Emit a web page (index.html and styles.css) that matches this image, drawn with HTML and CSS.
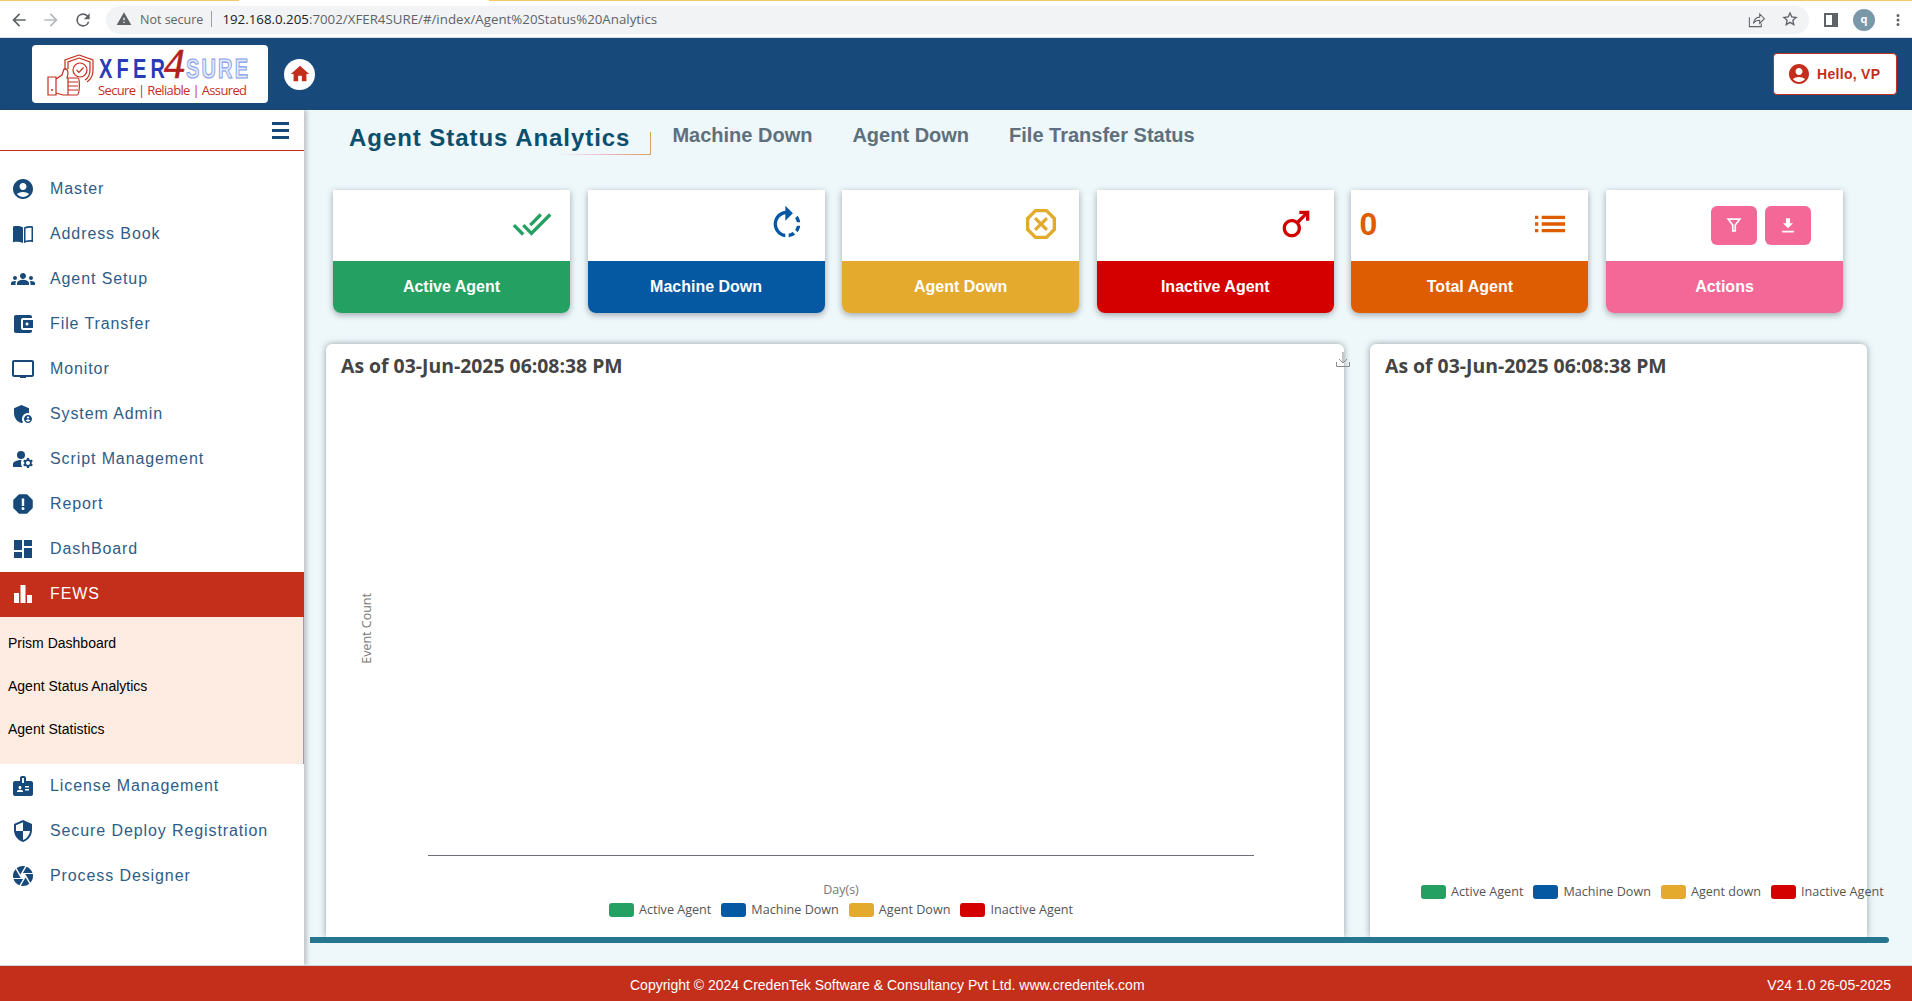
FILE: index.html
```html
<!DOCTYPE html>
<html lang="en">
<head>
    <meta charset="UTF-8">
    <meta name="viewport" content="width=device-width, initial-scale=1.0">
    <title>Agent Status Analytics - XFER4SURE</title>
    <link rel="stylesheet" href="styles.css">
</head>
<body>
    <!-- browser toolbar -->
    <div class="browser-bar">
        <svg class="tool-icon" viewBox="0 0 24 24"><path d="M20 11H7.83l5.59-5.59L12 4l-8 8 8 8 1.41-1.41L7.83 13H20v-2z"/></svg>
        <svg class="tool-icon dim" viewBox="0 0 24 24"><path d="M12 4l-1.41 1.41L16.17 11H4v2h12.17l-5.58 5.59L12 20l8-8z"/></svg>
        <svg class="tool-icon" viewBox="0 0 24 24"><path d="M17.65 6.35A7.96 7.96 0 0 0 12 4a8 8 0 1 0 7.73 10h-2.08A6 6 0 1 1 12 6c1.66 0 3.14.69 4.22 1.78L13 11h7V4l-2.35 2.35z"/></svg>
        <div class="address">
            <svg class="warn-icon" viewBox="0 0 24 24"><path d="M1 21h22L12 2 1 21zm12-3h-2v-2h2v2zm0-4h-2v-4h2v4z"/></svg>
            <span class="not-secure">Not secure</span>
            <span class="address-sep"></span>
            <span class="url"><b>192.168.0.205</b>:7002/XFER4SURE/#/index/Agent%20Status%20Analytics</span>
            <svg class="addr-icon share" viewBox="0 0 24 24"><path d="M3 9v12h15v-4M8 17c1-5 4-8 8-8V5l6 6-6 6v-4c-3 0-6 1-8 4z" fill="none" stroke="#5f6368" stroke-width="1.3"/></svg>
            <svg class="addr-icon" viewBox="0 0 24 24"><path d="M12 3l2.7 6 6.5.7-4.9 4.3 1.4 6.4L12 17l-5.700 3.400 1.400-6.400-4.900-4.300 6.500-.7z" fill="none" stroke="#5f6368" stroke-width="2"/></svg>
        </div>
        <span class="side-panel"></span>
        <span class="avatar">q</span>
        <svg class="tool-icon small" viewBox="0 0 24 24"><path d="M12 8a2 2 0 1 0 0-4 2 2 0 0 0 0 4zm0 2a2 2 0 1 0 0 4 2 2 0 0 0 0-4zm0 6a2 2 0 1 0 0 4 2 2 0 0 0 0-4z"/></svg>
    </div>

    <header class="top-header">
        <div class="logo">
            <svg viewBox="0 0 236 58" width="236" height="58">
                <g fill="none" stroke="#c42f1c" stroke-width="1.200">
                    <path d="M47 10l14 5v10c0 6-3 10-6 12"/>
                    <path d="M47 13l11 4v8c0 4-2 8-5 10"/>
                    <path d="M47 10l-14 5v10"/>
                    <path d="M47 13l-11 4v7"/>
                    <circle cx="48" cy="25" r="7"/>
                    <path d="M44.500 25l2.500 2.500 4.500-5"/>
                    <path d="M16 32h8v18h-8zM24 34l6-4 2-6c4-1 5 3 3 9h11c2 0 2 17-1 17H31l-7-2"/>
                    <path d="M36 33v17M36 37h10M36 41h10M36 45h10"/>
                </g>
                <circle cx="20" cy="45" r="1" fill="#c42f1c"/>
                <text class="logo-xfer" transform="translate(67 33) scale(1 1.35)" textLength="66" lengthAdjust="spacing">XFER</text>
                <text class="logo-sure" transform="translate(154 33) scale(1 1.35)" textLength="62" lengthAdjust="spacing">SURE</text>
                <text class="logo-four" x="132" y="33">4</text>
                <text class="logo-tag" x="66" y="50" textLength="149" lengthAdjust="spacing">Secure | Reliable | Assured</text>
            </svg>
        </div>
        <a class="home-btn">
            <svg viewBox="0 0 24 24" width="22" height="22"><path d="M10 20v-6h4v6h5v-8h3L12 3 2 12h3v8z"/></svg>
        </a>
        <button class="hello-btn">
            <svg viewBox="2 2 20 20" width="20" height="20"><path d="M12 2C6.48 2 2 6.48 2 12s4.48 10 10 10 10-4.48 10-10S17.52 2 12 2zm0 4c1.93 0 3.5 1.57 3.500 3.500S13.93 13 12 13s-3.500-1.570-3.500-3.500S10.070 6 12 6zm0 14c-2.030 0-4.430-.82-6.140-2.880C7.550 15.800 9.680 15 12 15s4.450.8 6.140 2.120C16.430 19.180 14.030 20 12 20z"/></svg>
            Hello, VP
        </button>
    </header>

    <div class="main">
        <aside class="sidebar">
            <div class="side-top">
                <span class="burger"><i></i><i></i><i></i></span>
            </div>
            <nav class="side-nav">
                <a class="nav-item"><svg viewBox="0 0 24 24"><path d="M12 2C6.48 2 2 6.48 2 12s4.48 10 10 10 10-4.48 10-10S17.52 2 12 2zm0 4c1.93 0 3.500 1.570 3.500 3.500S13.930 13 12 13s-3.500-1.570-3.500-3.500S10.070 6 12 6zm0 14c-2.030 0-4.430-.82-6.140-2.880C7.550 15.800 9.680 15 12 15s4.450.8 6.140 2.120C16.430 19.180 14.030 20 12 20z"/></svg>Master</a>
                <a class="nav-item"><svg viewBox="0 0 24 24"><path d="M2 4.500c3.500-.8 7-.6 10 1V21c-3-1.400-6.500-1.600-10-.8V4.500zM13 5.500c3-1.600 6-1.800 9-1v15.700c-3-.8-6-.6-9 .8V5.500zm1.500 1v12.300c2-.8 4.500-1 6-.7V5.800c-2-.4-4 0-6 .7z"/></svg>Address Book</a>
                <a class="nav-item"><svg viewBox="0 0 24 24"><path d="M12 12.750c1.630 0 3.070.39 4.240.9 1.080.48 1.760 1.560 1.760 2.730V18H6v-1.610c0-1.180.68-2.260 1.760-2.730 1.170-.52 2.610-.91 4.240-.91zM4 13c1.100 0 2-.9 2-2s-.9-2-2-2-2 .9-2 2 .9 2 2 2zm1.130 1.100c-.37-.06-.74-.1-1.130-.1-.99 0-1.930.21-2.780.58C.48 14.900 0 15.620 0 16.430V18h4.500v-1.610c0-.83.23-1.610.63-2.290zM20 13c1.100 0 2-.9 2-2s-.9-2-2-2-2 .9-2 2 .9 2 2 2zm4 3.430c0-.81-.48-1.530-1.220-1.850-.85-.37-1.790-.58-2.780-.58-.39 0-.76.04-1.130.1.4.68.63 1.460.63 2.290V18H24v-1.570zM12 6c1.660 0 3 1.340 3 3s-1.340 3-3 3-3-1.340-3-3 1.340-3 3-3z"/></svg>Agent Setup</a>
                <a class="nav-item"><svg viewBox="0 0 24 24"><path d="M21 18v1c0 1.100-.9 2-2 2H5c-1.110 0-2-.9-2-2V5c0-1.100.89-2 2-2h14c1.100 0 2 .9 2 2v1h-9c-1.110 0-2 .9-2 2v8c0 1.100.89 2 2 2h9zm-9-2h10V8H12v8zm4-2.500c-.83 0-1.500-.67-1.500-1.500s.67-1.500 1.500-1.500 1.500.67 1.500 1.500-.67 1.500-1.500 1.500z"/></svg>File Transfer</a>
                <a class="nav-item"><svg viewBox="0 0 24 24"><path d="M3 3h18c1.100 0 2 .9 2 2v13c0 1.100-.9 2-2 2h-6v1H9v-1H3c-1.100 0-2-.9-2-2V5c0-1.100.9-2 2-2zm0 2v13h18V5H3z"/></svg>Monitor</a>
                <a class="nav-item"><svg viewBox="0 0 24 24"><path d="M17 11c.34 0 .67.04 1 .09V6.270L10.500 3 3 6.270v4.910c0 4.540 3.200 8.790 7.500 9.820.55-.13 1.080-.32 1.600-.55-.69-.98-1.100-2.170-1.100-3.450 0-3.310 2.690-6 6-6zm0 2c-2.210 0-4 1.790-4 4s1.790 4 4 4 4-1.790 4-4-1.790-4-4-4zm0 1.380c.62 0 1.120.51 1.120 1.120s-.51 1.120-1.120 1.120-1.120-.51-1.120-1.120.5-1.120 1.120-1.120zm0 5.370c-.93 0-1.740-.46-2.240-1.170.05-.72 1.510-1.080 2.240-1.080s2.190.36 2.240 1.080c-.5.71-1.310 1.170-2.240 1.170z"/></svg>System Admin</a>
                <a class="nav-item"><svg viewBox="0 0 24 24"><circle cx="10" cy="8" r="4"/><path d="M10.670 13.020c-.22-.01-.44-.02-.67-.02-2.420 0-4.680.67-6.610 1.820-.88.52-1.390 1.500-1.390 2.530V20h9.260c-.79-1.130-1.260-2.510-1.260-4 0-1.070.25-2.070.67-2.980zM20.750 16c0-.22-.03-.42-.06-.63l1.140-1.010-1-1.730-1.450.49c-.32-.27-.68-.48-1.080-.63L18 11h-2l-.3 1.490c-.4.15-.76.36-1.080.63l-1.450-.49-1 1.730 1.140 1.010c-.03.21-.06.41-.06.63s.03.42.06.63l-1.140 1.010 1 1.730 1.450-.49c.32.27.68.48 1.080.63L16 21h2l.3-1.490c.4-.15.76-.36 1.080-.63l1.450.49 1-1.730-1.140-1.010c.03-.21.06-.41.06-.63zM17 18c-1.100 0-2-.9-2-2s.9-2 2-2 2 .9 2 2-.9 2-2 2z"/></svg>Script Management</a>
                <a class="nav-item"><svg viewBox="0 0 24 24"><path d="M15.730 3H8.270L3 8.270v7.460L8.270 21h7.460L21 15.730V8.270z" stroke="#174a7a" stroke-width="1.500" stroke-linejoin="round"/><path fill="#fff" d="M10.800 6.500h2.400v7.500h-2.400zM12 15a1.500 1.500 0 1 0 0 3 1.500 1.500 0 0 0 0-3z"/></svg>Report</a>
                <a class="nav-item"><svg viewBox="0 0 24 24"><path d="M3 13h8V3H3v10zm0 8h8v-6H3v6zm10 0h8V11h-8v10zm0-18v6h8V3h-8z"/></svg>DashBoard</a>
                <a class="nav-item active"><svg viewBox="0 0 24 24"><path d="M3 11h5v10H3zM9.500 3h5v18h-5zM16 13h5v8h-5z"/></svg>FEWS</a>
                <div class="sub-nav">
                    <a class="sub-item">Prism Dashboard</a>
                    <a class="sub-item">Agent Status Analytics</a>
                    <a class="sub-item">Agent Statistics</a>
                </div>
                <a class="nav-item"><svg viewBox="0 0 24 24"><path d="M20 7h-5V4c0-1.100-.9-2-2-2h-2c-1.100 0-2 .9-2 2v3H4c-1.100 0-2 .9-2 2v11c0 1.100.9 2 2 2h16c1.100 0 2-.9 2-2V9c0-1.100-.9-2-2-2zM9 12c.83 0 1.500.67 1.500 1.500S9.830 15 9 15s-1.500-.67-1.500-1.500S8.170 12 9 12zm3 6H6v-.75c0-1 2-1.500 3-1.500s3 .5 3 1.500V18zm1-9h-2V4h2v5zm5 7.500h-4V15h4v1.500zm0-3h-4V12h4v1.500z"/></svg>License Management</a>
                <a class="nav-item"><svg viewBox="0 0 24 24"><path d="M12 1L3 5v6c0 5.550 3.840 10.740 9 12 5.160-1.260 9-6.450 9-12V5l-9-4zm0 10.990h7c-.53 4.120-3.280 7.790-7 8.940V12H5V6.300l7-3.110v8.800z"/></svg>Secure Deploy Registration</a>
                <a class="nav-item"><svg viewBox="0 0 24 24"><path d="M9.400 10.500l4.770-8.260C13.470 2.090 12.750 2 12 2c-2.400 0-4.600.85-6.320 2.250l3.660 6.350.06-.1zM21.540 9c-.92-2.920-3.150-5.260-6-6.340L11.880 9h9.660zm.26 1h-7.490l.29.5 4.760 8.250C21 16.970 22 14.610 22 12c0-.69-.07-1.350-.2-2zM8.540 12l-3.900-6.750C3.010 7.030 2 9.390 2 12c0 .69.07 1.350.2 2h7.490l-1.150-2zm-6.080 3c.92 2.920 3.150 5.260 6 6.340L12.120 15H2.460zm11.270 0l-3.900 6.760c.7.15 1.420.24 2.170.24 2.400 0 4.600-.85 6.320-2.250l-3.660-6.350-.93 1.600z"/></svg>Process Designer</a>
            </nav>
        </aside>

        <section class="content">
            <div class="tabs-row">
                <h1 class="page-title">Agent Status Analytics</h1>
                <a class="tab">Machine Down</a>
                <a class="tab">Agent Down</a>
                <a class="tab">File Transfer Status</a>
            </div>

            <div class="cards">
                <div class="card green">
                    <div class="card-top">
                        <span class="card-num"></span>
                        <svg viewBox="0 0 24 24"><path d="M18 7l-1.410-1.410-6.340 6.340 1.410 1.410L18 7zm4.240-1.410L11.660 16.170 7.480 12l-1.410 1.410L11.660 19l12-12-1.420-1.410zM.41 13.410L6 19l1.410-1.410L1.830 12 .41 13.410z"/></svg>
                    </div>
                    <div class="card-label">Active Agent</div>
                </div>
                <div class="card blue">
                    <div class="card-top">
                        <span class="card-num"></span>
                        <svg viewBox="0 0 24 24"><path d="M15.550 5.550L11 1v3.070C7.060 4.560 4 7.920 4 12s3.050 7.440 7 7.930v-2.020c-2.840-.48-5-2.940-5-5.910s2.160-5.430 5-5.910V10l4.550-4.450zM19.930 11c-.17-1.390-.72-2.730-1.620-3.890l-1.420 1.420c.54.75.88 1.600 1.020 2.470h2.020zM13 17.900v2.020c1.390-.17 2.740-.71 3.900-1.610l-1.440-1.440c-.75.54-1.590.89-2.460 1.030zm3.890-2.420l1.420 1.410c.9-1.160 1.450-2.500 1.620-3.890h-2.020c-.14.87-.48 1.720-1.020 2.480z"/></svg>
                    </div>
                    <div class="card-label">Machine Down</div>
                </div>
                <div class="card yellow">
                    <div class="card-top">
                        <span class="card-num"></span>
                        <svg viewBox="0 0 24 24"><path d="M15.730 3H8.270L3 8.270v7.460L8.270 21h7.460L21 15.730V8.270L15.730 3zM19 14.900L14.900 19H9.100L5 14.900V9.100L9.100 5h5.800L19 9.100v5.800z"/><path d="M14.830 7.760L12 10.590 9.170 7.760 7.760 9.170 10.590 12l-2.830 2.830 1.410 1.410L12 13.410l2.830 2.830 1.410-1.410L13.410 12l2.830-2.830z"/></svg>
                    </div>
                    <div class="card-label">Agent Down</div>
                </div>
                <div class="card red">
                    <div class="card-top">
                        <span class="card-num"></span>
                        <svg viewBox="0 0 24 24"><path d="M9.500 11c1.930 0 3.500 1.570 3.500 3.500S11.430 18 9.500 18 6 16.430 6 14.500 7.570 11 9.500 11zm0-2C6.460 9 4 11.460 4 14.500S6.460 20 9.500 20s5.500-2.460 5.500-5.500c0-1.160-.36-2.230-.97-3.120L18 7.420V10h2V4h-6v2h2.580l-3.970 3.970C11.730 9.360 10.660 9 9.500 9z"/></svg>
                    </div>
                    <div class="card-label">Inactive Agent</div>
                </div>
                <div class="card orange">
                    <div class="card-top">
                        <span class="card-num">0</span>
                        <svg viewBox="0 0 24 24"><path d="M3 13h2v-2H3v2zm0 4h2v-2H3v2zm0-8h2V7H3v2zm4 4h14v-2H7v2zm0 4h14v-2H7v2zM7 7v2h14V7H7z"/></svg>
                    </div>
                    <div class="card-label">Total Agent</div>
                </div>
                <div class="card pink">
                    <div class="card-top actions">
                        <button class="action-btn"><svg viewBox="0 0 24 24"><path d="M5 5h14l-5.500 7v7h-3v-7z" fill="none" stroke="#fff" stroke-width="2"/></svg></button>
                        <button class="action-btn"><svg viewBox="0 0 24 24"><path d="M9.500 4h5v6H18l-6 6-6-6h3.500zM5 19h14v2H5z"/></svg></button>
                    </div>
                    <div class="card-label">Actions</div>
                </div>
            </div>

            <div class="charts">
                <div class="panel panel-main">
                    <h2 class="panel-title">As of 03-Jun-2025 06:08:38 PM</h2>
                    <svg class="chart-save" viewBox="0 0 14 15"><path d="M7 0v11M3 7l4 4 4-4M.5 10v4.500h13V10" fill="none" stroke="#8c8c8c"/></svg>
                    <div class="plot"><span class="y-label">Event Count</span></div>
                    <div class="chart-foot">
                        <div class="x-label">Day(s)</div>
                        <div class="legend">
                            <span class="legend-item"><i class="swatch bg-green"></i>Active Agent</span>
                            <span class="legend-item"><i class="swatch bg-blue"></i>Machine Down</span>
                            <span class="legend-item"><i class="swatch bg-yellow"></i>Agent Down</span>
                            <span class="legend-item"><i class="swatch bg-red"></i>Inactive Agent</span>
                        </div>
                    </div>
                </div>
                <div class="panel panel-side">
                    <h2 class="panel-title">As of 03-Jun-2025 06:08:38 PM</h2>
                    <div class="plot"></div>
                    <div class="legend side-legend">
                        <span class="legend-item"><i class="swatch bg-green"></i>Active Agent</span>
                        <span class="legend-item"><i class="swatch bg-blue"></i>Machine Down</span>
                        <span class="legend-item"><i class="swatch bg-yellow"></i>Agent down</span>
                        <span class="legend-item"><i class="swatch bg-red"></i>Inactive Agent</span>
                    </div>
                </div>
            </div>
            <div class="h-scroll"></div>
        </section>
    </div>

    <footer class="page-footer">
        <span>Copyright © 2024 CredenTek Software &amp; Consultancy Pvt Ltd. www.credentek.com</span>
        <span class="version">V24 1.0 26-05-2025</span>
    </footer>
</body>
</html>
```

FILE: styles.css
```css
* {
    box-sizing: border-box;
}
html, body {
    height: 100%;
}
body {
    margin: 0;
    display: flex;
    flex-direction: column;
    overflow: hidden;
    background: #eef7fa;
    font-family: "Liberation Sans", Arial, sans-serif;
}

/* browser toolbar */
.browser-bar {
    height: 38px;
    flex: none;
    display: flex;
    align-items: center;
    padding: 2px 0 0 9px;
    background: linear-gradient(to right, #f3cb66 239px, #fff 239px, #fff 489px, #f3cb66 489px) top / 100% 1px no-repeat, #fff;
    border-bottom: 1px solid #dadce0;
}
.tool-icon {
    width: 20px;
    height: 20px;
    margin-right: 12px;
    fill: #5f6368;
}
.tool-icon.dim { fill: #b5b8bb; }
.tool-icon.small {
    width: 18px;
    height: 18px;
    margin: 0 0 0 14px;
}
.address {
    width: 1703px;
    height: 28px;
    margin-left: 1px;
    display: flex;
    align-items: center;
    padding: 0 0 1px 10px;
    border-radius: 14px;
    background: #f1f3f4;
    font-family: "Open Sans", sans-serif;
    font-size: 12.5px;
}
.warn-icon {
    width: 16px;
    height: 16px;
    fill: #5f6368;
}
.not-secure {
    margin-left: 8px;
    color: #5f6368;
}
.address-sep {
    width: 1px;
    height: 16px;
    margin: 0 10px 0 8px;
    background: #9aa0a6;
}
.url {
    color: #5f6368;
    font-size: 13.3px;
}
.url b {
    font-weight: 400;
    color: #202124;
}
.addr-icon {
    width: 16px;
    height: 16px;
    margin-left: 16px;
}
.addr-icon.share {
    width: 19px;
    height: 19px;
    margin-left: auto;
}
.address .addr-icon:last-child {
    margin-right: 11px;
}
.side-panel {
    width: 14px;
    height: 14px;
    margin-left: 15px;
    border: 2px solid #5f6368;
    border-right-width: 6px;
}
.avatar {
    width: 22px;
    height: 22px;
    margin-left: 15px;
    border-radius: 50%;
    background: #7b98a8;
    color: #fff;
    font: bold 11px/20px "Open Sans", sans-serif;
    text-align: center;
}

/* app header */
.top-header {
    height: 72px;
    flex: none;
    display: flex;
    align-items: center;
    padding: 0 15px 0 32px;
    background: #174a7a;
}
.logo {
    width: 236px;
    height: 58px;
    background: #fff;
    border-radius: 4px;
}
.logo svg {
    display: block;
    overflow: visible;
}
.logo-xfer, .logo-sure {
    font: bold 20px "Liberation Sans", sans-serif;
}
.logo-xfer { fill: #2a3bb5; }
.logo-sure {
    fill: #e4eafb;
    stroke: #7f9be8;
    stroke-width: .8;
}
.logo-four {
    font: italic 42px "Liberation Serif", serif;
    fill: #b3201c;
    stroke: #b3201c;
    stroke-width: .5;
}
.logo-tag {
    font: 13px "Open Sans", sans-serif;
    fill: #c42f1c;
}
.home-btn {
    width: 31px;
    height: 31px;
    margin-left: 16px;
    display: flex;
    align-items: center;
    justify-content: center;
    border-radius: 50%;
    background: #fff;
    fill: #c42f1c;
}
.hello-btn {
    width: 124px;
    height: 42px;
    margin-left: auto;
    display: flex;
    align-items: center;
    gap: 8px;
    padding: 0 0 0 15px;
    background: #fff;
    border: 1px solid #c42f1c;
    border-radius: 4px;
    color: #c42f1c;
    fill: #c42f1c;
    font: bold 14px "Liberation Sans", sans-serif;
    letter-spacing: .3px;
}

/* layout */
.main {
    flex: 1;
    min-height: 0;
    display: flex;
}
.sidebar {
    width: 304px;
    flex: none;
    background: #fff;
    box-shadow: 3px 0 4px rgba(60, 50, 50, .25);
    position: relative;
    z-index: 2;
}
.side-top {
    height: 41px;
    display: flex;
    justify-content: flex-end;
    align-items: center;
    padding-right: 15px;
    border-bottom: 1px solid #c42f1c;
}
.burger {
    width: 17px;
    display: flex;
    flex-direction: column;
    gap: 4px;
}
.burger i {
    height: 3px;
    background: #174a7a;
}
.side-nav {
    margin-top: 16px;
}
.nav-item {
    height: 45px;
    display: flex;
    align-items: center;
    gap: 15px;
    padding: 0 0 2px 11px;
    color: #2f5c88;
    font-size: 16px;
    letter-spacing: .9px;
}
.nav-item svg {
    width: 24px;
    height: 24px;
    flex: none;
    fill: #174a7a;
}
.nav-item.active {
    background: #c42f1c;
    color: #fff;
}
.nav-item.active svg {
    fill: #fff;
}
.sub-nav {
    height: 147px;
    padding-top: 5px;
    background: #feece2;
    border-right: 1px solid #5bb5dd;
}
.sub-item {
    height: 43px;
    display: flex;
    align-items: center;
    padding: 0 0 2px 8px;
    color: #000;
    font-size: 14px;
}

/* page content */
.content {
    flex: 1;
    min-width: 0;
    display: flex;
    flex-direction: column;
}
.tabs-row {
    height: 80px;
    flex: none;
    display: flex;
    align-items: flex-start;
    padding: 12px 0 0 45px;
}
.page-title {
    position: relative;
    height: 32px;
    margin: 1px 21px 0 0;
    padding-right: 21px;
    color: #0b4f6c;
    font-size: 24px;
    font-weight: bold;
    line-height: 30px;
    letter-spacing: .95px;
}
.page-title::after {
    content: "";
    position: absolute;
    right: 0;
    bottom: 0;
    width: 90px;
    height: 22px;
    border-right: 1px solid #d9a05c;
    border-bottom: 1px solid;
    border-image: linear-gradient(to right, transparent, #efb7c6 50%, #d9a05c) 1;
}
.tab {
    margin-right: 40px;
    color: #5d707c;
    font-size: 20px;
    font-weight: bold;
    line-height: 26px;
}
.cards {
    width: 1510px;
    margin-left: 29px;
    flex: none;
    display: grid;
    grid-template-columns: repeat(6, 1fr);
    column-gap: 17.6px;
}
.card {
    height: 123px;
    display: flex;
    flex-direction: column;
    border-radius: 0 0 8px 8px;
    background: #fff;
    box-shadow: 0 2px 6px rgba(60, 70, 80, .45);
    overflow: hidden;
}
.card-top {
    height: 71px;
    display: flex;
    align-items: center;
    justify-content: space-between;
    padding: 0 18px 4px 8px;
}
.card-top svg {
    width: 40px;
    height: 40px;
    fill: currentColor;
}
.card-num {
    margin-top: 2px;
    font-size: 32px;
    font-weight: bold;
}
.card-label {
    flex: 1;
    display: flex;
    align-items: center;
    justify-content: center;
    color: #fff;
    font-size: 16px;
    font-weight: bold;
}
.card-top.actions {
    justify-content: flex-end;
    gap: 8px;
    padding: 0 32px 1px 0;
}
.action-btn {
    width: 46px;
    height: 39px;
    display: flex;
    align-items: center;
    justify-content: center;
    padding: 0;
    border: none;
    border-radius: 6px;
    background: #f36896;
}
.action-btn svg {
    width: 20px;
    height: 20px;
    fill: #fff;
}
.green { color: #24a062; }
.blue { color: #0558a2; }
.yellow { color: #e4aa2d; }
.red { color: #d40000; }
.orange { color: #de5c02; }
.pink { color: #f36896; }
.green .card-label, .bg-green { background: #24a062; }
.blue .card-label, .bg-blue { background: #0558a2; }
.yellow .card-label, .bg-yellow { background: #e4aa2d; }
.red .card-label, .bg-red { background: #d40000; }
.orange .card-label { background: #de5c02; }
.pink .card-label { background: #f36896; }

/* charts */
.charts {
    height: 593px;
    margin: 31px 0 0 22px;
    flex: none;
    display: flex;
    gap: 26px;
}
.panel {
    position: relative;
    display: flex;
    flex-direction: column;
    background: #fff;
    border-radius: 6px 6px 0 0;
    box-shadow: 0 0 6px rgba(60, 70, 80, .5);
}
.panel-main { width: 1018px; }
.panel-side { width: 497px; }
.panel-title {
    margin: 0;
    padding: 10px 15px 0;
    color: #444;
    font: bold 19.4px/24px "Open Sans", sans-serif;
    white-space: nowrap;
}
.plot {
    flex: 1;
    position: relative;
}
.y-label {
    position: absolute;
    left: 32px;
    top: 215px;
    writing-mode: vertical-rl;
    transform: rotate(180deg);
    color: #777;
    font: 12.5px "Open Sans", sans-serif;
}
.chart-save {
    position: absolute;
    top: 8px;
    right: -6px;
    width: 14px;
    height: 15px;
}
.chart-foot {
    width: 826px;
    margin: 0 0 19px 102px;
    padding-top: 26px;
    border-top: 1px solid #6e7079;
    font: 12.5px/16px "Open Sans", sans-serif;
}
.x-label {
    margin-bottom: 4px;
    color: #777;
    text-align: center;
}
.legend {
    display: flex;
    justify-content: center;
    gap: 10px;
    color: #555;
    font: 12.6px/16px "Open Sans", sans-serif;
    white-space: nowrap;
}
.legend-item {
    display: flex;
    align-items: center;
    gap: 5px;
}
.swatch {
    width: 25px;
    height: 14px;
    border-radius: 3px;
}
.side-legend {
    justify-content: flex-start;
    margin: 0 0 37px 51px;
}
.h-scroll {
    width: 1579px;
    height: 6px;
    margin-left: 6px;
    flex: none;
    position: relative;
    background: #27768f;
    border-radius: 0 3px 3px 0;
}

.page-footer {
    height: 36px;
    flex: none;
    display: flex;
    align-items: center;
    padding: 3px 21px 0 630px;
    background: #c42f1c;
    border-top: 1px solid #c9d6da;
    color: #fff;
    font-size: 14px;
    position: relative;
    z-index: 3;
}
.version {
    margin-left: auto;
}
```
